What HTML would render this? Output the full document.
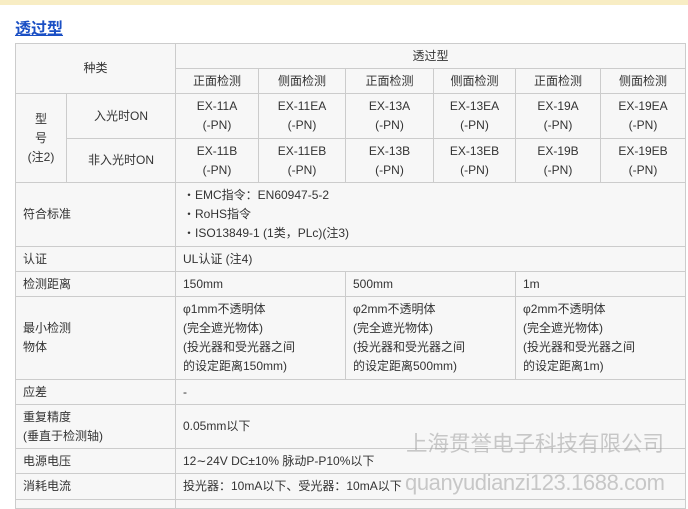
<!DOCTYPE html>
<html><head><meta charset="utf-8"><style>
body{margin:0;width:688px;height:503px;overflow:hidden;background:#fff;font-family:"Liberation Sans","Noto Sans CJK SC",sans-serif;font-size:12px;color:#333;position:relative}
.c{position:absolute;box-sizing:border-box;border:1px solid #ccc;background:#f7f7f7;display:flex;flex-direction:column;justify-content:center;line-height:19px}
.m{align-items:center;text-align:center}
.l{padding-left:7px}
.wm{position:absolute;color:rgba(160,160,160,0.55);white-space:nowrap}
</style></head><body>
<div style="position:absolute;left:0;top:0;width:688px;height:5px;background:#f8edc4"></div>
<div style="position:absolute;left:15px;top:15px;font-size:16px;font-weight:bold;color:#1a4fc4;text-decoration:underline">透过型</div>

<div class="c m" style="left:15px;top:43px;width:161px;height:51px">种类</div>
<div class="c m" style="left:175px;top:43px;width:511px;height:26px">透过型</div>
<div class="c m" style="left:175px;top:68px;width:84px;height:26px">正面检测</div>
<div class="c m" style="left:258px;top:68px;width:88px;height:26px">侧面检测</div>
<div class="c m" style="left:345px;top:68px;width:89px;height:26px">正面检测</div>
<div class="c m" style="left:433px;top:68px;width:83px;height:26px">侧面检测</div>
<div class="c m" style="left:515px;top:68px;width:86px;height:26px">正面检测</div>
<div class="c m" style="left:600px;top:68px;width:86px;height:26px">侧面检测</div>

<div class="c m" style="left:15px;top:93px;width:52px;height:90px">型<br>号<br>(注2)</div>
<div class="c m" style="left:66px;top:93px;width:110px;height:46px">入光时ON</div>
<div class="c m" style="left:66px;top:138px;width:110px;height:45px">非入光时ON</div>

<div class="c m" style="left:175px;top:93px;width:84px;height:46px">EX-11A<br>(-PN)</div>
<div class="c m" style="left:258px;top:93px;width:88px;height:46px">EX-11EA<br>(-PN)</div>
<div class="c m" style="left:345px;top:93px;width:89px;height:46px">EX-13A<br>(-PN)</div>
<div class="c m" style="left:433px;top:93px;width:83px;height:46px">EX-13EA<br>(-PN)</div>
<div class="c m" style="left:515px;top:93px;width:86px;height:46px">EX-19A<br>(-PN)</div>
<div class="c m" style="left:600px;top:93px;width:86px;height:46px">EX-19EA<br>(-PN)</div>
<div class="c m" style="left:175px;top:138px;width:84px;height:45px">EX-11B<br>(-PN)</div>
<div class="c m" style="left:258px;top:138px;width:88px;height:45px">EX-11EB<br>(-PN)</div>
<div class="c m" style="left:345px;top:138px;width:89px;height:45px">EX-13B<br>(-PN)</div>
<div class="c m" style="left:433px;top:138px;width:83px;height:45px">EX-13EB<br>(-PN)</div>
<div class="c m" style="left:515px;top:138px;width:86px;height:45px">EX-19B<br>(-PN)</div>
<div class="c m" style="left:600px;top:138px;width:86px;height:45px">EX-19EB<br>(-PN)</div>

<div class="c l" style="left:15px;top:182px;width:161px;height:65px">符合标准</div>
<div class="c l" style="left:175px;top:182px;width:511px;height:65px">・EMC指令：EN60947-5-2<br>・RoHS指令<br>・ISO13849-1 (1类，PLc)(注3)</div>

<div class="c l" style="left:15px;top:246px;width:161px;height:26px">认证</div>
<div class="c l" style="left:175px;top:246px;width:511px;height:26px">UL认证 (注4)</div>

<div class="c l" style="left:15px;top:271px;width:161px;height:26px">检测距离</div>
<div class="c l" style="left:175px;top:271px;width:171px;height:26px">150mm</div>
<div class="c l" style="left:345px;top:271px;width:171px;height:26px">500mm</div>
<div class="c l" style="left:515px;top:271px;width:171px;height:26px">1m</div>

<div class="c l" style="left:15px;top:296px;width:161px;height:84px">最小检测<br>物体</div>
<div class="c l" style="left:175px;top:296px;width:171px;height:84px">φ1mm不透明体<br>(完全遮光物体)<br>(投光器和受光器之间<br>的设定距离150mm)</div>
<div class="c l" style="left:345px;top:296px;width:171px;height:84px">φ2mm不透明体<br>(完全遮光物体)<br>(投光器和受光器之间<br>的设定距离500mm)</div>
<div class="c l" style="left:515px;top:296px;width:171px;height:84px">φ2mm不透明体<br>(完全遮光物体)<br>(投光器和受光器之间<br>的设定距离1m)</div>

<div class="c l" style="left:15px;top:379px;width:161px;height:26px">应差</div>
<div class="c l" style="left:175px;top:379px;width:511px;height:26px">-</div>

<div class="c l" style="left:15px;top:404px;width:161px;height:45px">重复精度<br>(垂直于检测轴)</div>
<div class="c l" style="left:175px;top:404px;width:511px;height:45px">0.05mm以下</div>

<div class="c l" style="left:15px;top:448px;width:161px;height:26px">电源电压</div>
<div class="c l" style="left:175px;top:448px;width:511px;height:26px">12∼24V DC±10% 脉动P-P10%以下</div>

<div class="c l" style="left:15px;top:473px;width:161px;height:27px">消耗电流</div>
<div class="c l" style="left:175px;top:473px;width:511px;height:27px">投光器：10mA以下、受光器：10mA以下</div>
<div class="c" style="left:15px;top:499px;width:161px;height:10px"></div>
<div class="c" style="left:175px;top:499px;width:511px;height:10px"></div>

<div class="wm" style="left:406px;top:427px;font-size:21.5px">上海贯誉电子科技有限公司</div>
<div class="wm" style="left:405px;top:470px;font-size:22px;letter-spacing:-0.4px">quanyudianzi123.1688.com</div>
</body></html>
